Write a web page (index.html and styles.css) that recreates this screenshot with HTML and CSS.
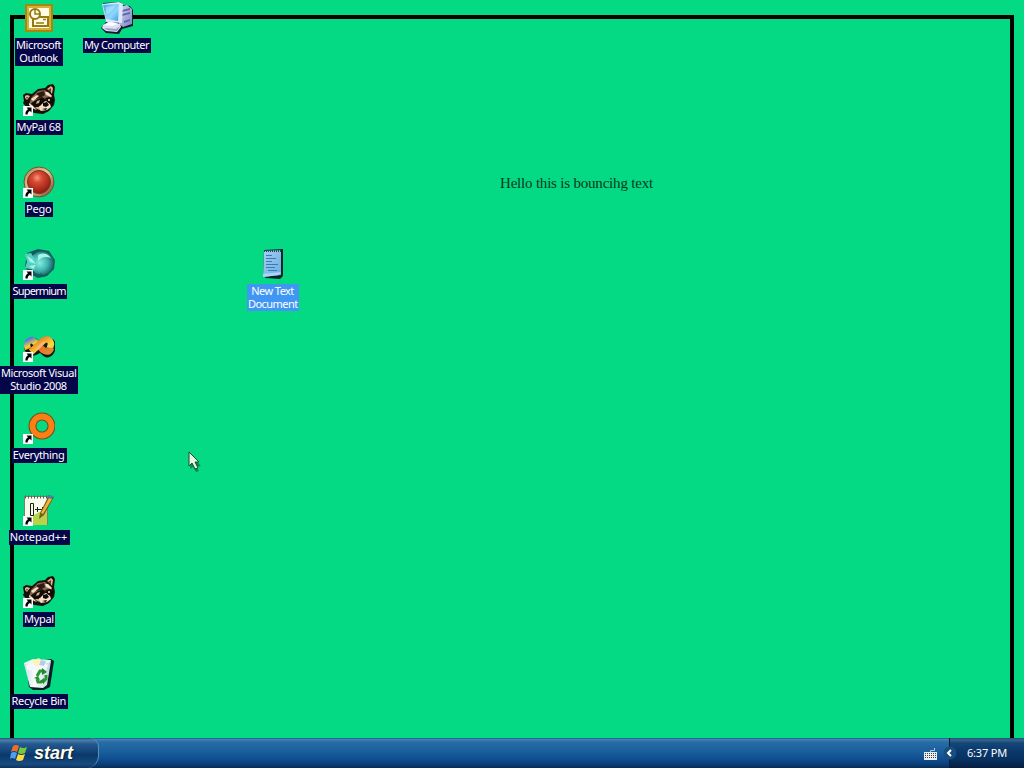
FILE: index.html
```html
<!DOCTYPE html>
<html lang="en">
<head>
<meta charset="utf-8">
<title>Desktop</title>
<link rel="stylesheet" href="styles.css">
</head>
<body>
<svg width="0" height="0" class="defs" aria-hidden="true">
  <defs>
    <radialGradient id="redball" cx=".42" cy=".32" r=".7"><stop offset="0" stop-color="#f49a80"/><stop offset=".3" stop-color="#d94a32"/><stop offset="1" stop-color="#8c180e"/></radialGradient>
    <linearGradient id="ring" x2="1" y2="1"><stop stop-color="#b37a4a"/><stop offset=".45" stop-color="#ecca92"/><stop offset="1" stop-color="#714023"/></linearGradient>
    <radialGradient id="teal" cx=".4" cy=".5" r=".65"><stop offset="0" stop-color="#84eee2"/><stop offset=".5" stop-color="#42b8b0"/><stop offset="1" stop-color="#0c5355"/></radialGradient>
    <linearGradient id="screen" x2="1" y2="1"><stop stop-color="#4aa6ee"/><stop offset=".6" stop-color="#8ed8fc"/><stop offset="1" stop-color="#4596e0"/></linearGradient>
    <linearGradient id="case" x2="1" y2="1"><stop stop-color="#d4d9fa"/><stop offset="1" stop-color="#7c84c0"/></linearGradient>
    <linearGradient id="paper" x2="1" y2="1"><stop stop-color="#a5d0ee"/><stop offset="1" stop-color="#6cacdf"/></linearGradient>
    <linearGradient id="bin" x2="1"><stop stop-color="#c9dce8"/><stop offset=".4" stop-color="#fbfdfd"/><stop offset="1" stop-color="#b9d6e0"/></linearGradient>
    <linearGradient id="vsa" x2="1" y2="1"><stop stop-color="#5d79d8"/><stop offset=".3" stop-color="#f0d238"/><stop offset=".55" stop-color="#f06a2c"/><stop offset="1" stop-color="#e0892f"/></linearGradient>
    <linearGradient id="vsb" x2="1" y2="1"><stop stop-color="#e75a35"/><stop offset=".4" stop-color="#f3a82c"/><stop offset=".7" stop-color="#f4dc48"/><stop offset="1" stop-color="#e8b040"/></linearGradient>
    <symbol id="shortcut" viewBox="0 0 10 10"><path fill="#fff" d="M0 0h10v10H0z"/><path fill="#000" d="M3.500 1.500h5v5L7 5C5.200 5.600 4.600 7 4.700 8.500H2.500C2 6.200 3.300 4.400 5 3.200z"/></symbol>
    <symbol id="raccoon" viewBox="0 0 32 32">
      <path fill="#17100c" d="M1 17L0 11l3-2 6 1 6-5 7-1 3-3 5-1 2 3-1 8 1 5-1 5-5 6-6 3-9-1-7-5-4-5z"/>
      <path fill="#e9b28a" d="M2 12l2-1 3 1-3 4-2-2zM24 5l4-3 2 2-1 6-2-3z"/>
      <path fill="#5f3d2c" d="M25 6l3-2v4zM3 13l2 0-1 2z"/>
      <path fill="#8c634c" d="M8 14l7-7 7-1 6 5 1 5-5 0-5-3-9 5-4 3z"/>
      <path fill="#2c1b13" d="M14 9l7-2 1 4-5 3-4 1z"/>
      <path fill="#f5dfc2" d="M8 15l6-4 2 1-6 5zM22 8l3 0 4 4-1 1-5-2zM6 19l3 2 5 5-3-1-5-4zM18 19l5-2 4 3 1 3-4 3-6 1-3-3z"/>
      <path fill="#110b08" d="M9 19l6-4 5 0 1 3-4 4-5 1zM22 14l5-1 4 3-1 4-4-1z"/>
      <path fill="#d9a884" d="M14 17l3-1-1 3-3 1zM25 15l2 0 0 2-2 0zM12 23l4 0 1 3-3-1z"/>
      <path fill="#100b0a" d="M20 19l4-1 2 3-3 2-3-1zM19 25l5-1-1 2z"/>
    </symbol>
  </defs>
</svg>
<main class="desktop">
  <div class="frame"></div>
  <div class="column">
    <div class="item">
      <svg class="icon" viewBox="0 0 32 32"><path fill="#a88610" d="M2 2h28v28H2z"/><path fill="#d0b23a" d="M4 4h24v24H4z"/><path fill="#fffce5" d="M6 6h20v20H6z"/><path fill="#fffce5" stroke="#977b10" stroke-width="2" d="M10 15h15v9H10z"/><path fill="none" stroke="#977b10" stroke-width="1.500" d="M20 17.500h3M13 21h8"/><circle cx="12" cy="12" r="5" fill="#fffce5" stroke="#977b10" stroke-width="2"/><path fill="none" stroke="#977b10" stroke-width="1.500" d="M12 8v4h4"/></svg>
      <span class="label outlook">Microsoft<br>Outlook</span>
    </div>
    <div class="item">
      <svg class="icon" viewBox="0 0 32 32"><use href="#raccoon" width="32" height="32"/><use href="#shortcut" y="22" width="10" height="10"/></svg>
      <span class="label mypal68">MyPal 68</span>
    </div>
    <div class="item">
      <svg class="icon" viewBox="0 0 32 32"><circle cx="16" cy="16" r="15" fill="url(#ring)" stroke="#68553a"/><circle cx="16" cy="16" r="11.500" fill="url(#redball)" stroke="#75362a"/><use href="#shortcut" y="22" width="10" height="10"/></svg>
      <span class="label pego">Pego</span>
    </div>
    <div class="item">
      <svg class="icon" viewBox="0 0 32 32"><path fill="#125b58" d="M4 5L15 1l11 2 6 9-1 9-7 7-9 2-8-4-5-7z"/><ellipse cx="19" cy="15" rx="12" ry="11.500" fill="url(#teal)"/><path fill="#55cfc0" d="M2 6l6-1 5 8-1 9-10-2 2-6z"/><path fill="#a5f5e6" d="M4 8l5 3 4 5-6-2zM15 7q8-4 13 3-8-3-13 3zM6 18l7-1-3 4z"/><path fill="none" stroke="#126b65" d="M12 25l4 5M17 25l5 4"/><use href="#shortcut" y="22" width="10" height="10"/></svg>
      <span class="label supermium">Supermium</span>
    </div>
    <div class="item">
      <svg class="icon" viewBox="0 0 32 32"><path fill="none" stroke="#151713" stroke-width="8" d="M7 13q-5 5 2 9 5 0 14-10 6-2 6 5-2 8-6 6L11 12q-3-1-5 2"/><path fill="none" stroke="url(#vsa)" stroke-width="6.500" d="M5 19q-3-8 4-9l4 3 7 7q6 4 8-2"/><path fill="none" stroke="url(#vsb)" stroke-width="6.500" d="M8 22l13-12q6-2 7 4l-1 4"/><path fill="none" stroke="#ffb090" stroke-width="2" d="M14 19l7-7"/><use href="#shortcut" y="22" width="10" height="10"/></svg>
      <span class="label studio">Microsoft Visual<br>Studio 2008</span>
    </div>
    <div class="item">
      <svg class="icon" viewBox="0 0 32 32"><circle cx="19" cy="14" r="9.500" fill="none" stroke="#71501a" stroke-width="8"/><circle cx="19" cy="14" r="9.500" fill="none" stroke="#fa7f16" stroke-width="5.800"/><use href="#shortcut" y="22" width="10" height="10"/></svg>
      <span class="label everything">Everything</span>
    </div>
    <div class="item">
      <svg class="icon" viewBox="0 0 32 32"><path fill="#6c8872" d="M1 2h24v29H1z"/><path fill="#f8faec" d="M2 3h22v24H2z"/><path fill="#b7d448" d="M9 22l15-8v17H9z"/><path stroke="#59635b" stroke-dasharray="1 2" stroke-width="3" d="M2 3h22"/><path fill="none" stroke="#182018" d="M7.500 9.500h3v12h-3zM12 15.500h5M14.500 13v5M17 15.500h5M19.500 13v5"/><path fill="#745d24" d="M26 1l5 2-10 18-5 4 1-6z"/><path fill="#edb833" d="M26 4l3 1-9 15-2-1z"/><path fill="#3e87b6" d="M25 1l5 1-1 3-5-2z"/><use href="#shortcut" y="22" width="10" height="10"/></svg>
      <span class="label notepad">Notepad++</span>
    </div>
    <div class="item">
      <svg class="icon" viewBox="0 0 32 32"><use href="#raccoon" width="32" height="32"/><use href="#shortcut" y="22" width="10" height="10"/></svg>
      <span class="label mypal">Mypal</span>
    </div>
    <div class="item">
      <svg class="icon" viewBox="0 0 32 32"><path fill="#071e23" d="M3 5l25-4 3 2-4 26-6 3H10l-4-3z"/><path fill="#eff7f5" d="M1 5l9-4 18 1-2 6H2z"/><path fill="url(#bin)" d="M1 6l25-1 2-2-4 24-4 3-13-1z"/><path fill="#fff3b5" d="M9 3l7-3 4 5-7 5z"/><path fill="#f4f8fb" d="M3 7l7-2 4 4 6-5 5 3-2 5H4z"/><path fill="#b8cbed" d="M18 2l5 1-2 5-5-1z"/><g fill="none" stroke="#259b32" stroke-width="3"><path d="M14 18l3-5h4M23 17l0 4-3 3M19 24h-4l-1-3"/></g><path fill="#25882d" d="M19 10l5 4-5 3zM21 20v6l-4-3zM11 20l4-2 2 4z"/></svg>
      <span class="label recycle">Recycle Bin</span>
    </div>
  </div>
  <div class="item computer-item">
    <svg class="icon wide" viewBox="0 0 34 32"><path fill="#151932" d="M3 1L20 0l2 3 8 1 3 4v16l-11 3-3 5-13-1-5-5 5-6z"/><path fill="url(#case)" d="M20 5l7-2 5 4v15l-9 3-4-3z"/><path fill="#5d6aa6" d="M22 8l8-2v2l-8 2zM22 12l8-2v2l-8 2zM24 19l6-2v2l-6 2z"/><path fill="#dce8fb" d="M2 2l17-2 4 2-1 19-16-1z"/><path fill="url(#screen)" d="M3 3l16-1-1 17-12-2z"/><path fill="#c2f0ff" d="M6 5l10-2-4 6-6 4z" opacity=".5"/><path fill="#dddff5" d="M3 23l7-4 10 3 1 3-4 5-11-1-4-3z"/><path fill="#fff" d="M4 23l6-3 8 2-6 2z"/><path fill="#929fca" d="M4 26l12 1 4-3-3 5-10-1z"/></svg>
    <span class="label computer">My Computer</span>
  </div>
  <div class="item document-item">
    <svg class="icon" viewBox="0 0 32 32"><path fill="#06242b" d="M7 2l19-1v27l-3 3-14-1-3-2z"/><path fill="url(#paper)" d="M7 3l17-1v25l-18 2z"/><path stroke="#254968" stroke-dasharray="1 1" stroke-width="2" d="M7 3h17"/><path fill="none" stroke="#3a78bd" d="M9 7.500h6M9 10.500h10M9 13.500h6M9 16.500h12M9 19.500h9M11 22.500h9"/><path fill="#a9d5f6" d="M6 26l18-2-2 3-16 2z"/></svg>
    <span class="label selected">New Text<br>Document</span>
  </div>
  <p class="bouncing">Hello this is bouncihg text</p>
  <svg class="cursor" viewBox="0 0 14 21"><path fill="#07562f" opacity=".6" d="M3 4l10 11-5 1 3 4-3 1-3-5-3 2z"/><path fill="#e8f4e8" stroke="#184d30" d="M1 1l10 10H7l3 6-3 1-3-6-3 3z"/></svg>
</main>
<footer class="taskbar">
  <div class="start">
    <svg class="flag" viewBox="0 0 18 18"><path fill="#f16b2a" d="M3 2q3-2 6 0L7 8q-3-2-6 0z"/><path fill="#76c83d" d="M10 3q3 2 7 0l-2 6q-4 2-7 0z"/><path fill="#4d9df0" d="M1 9q3-2 6 0l-2 6q-3-2-5 0z"/><path fill="#ffda3d" d="M8 10q3 2 7 0l-2 6q-4 2-7 0z"/></svg>
    <span>start</span>
  </div>
  <div class="tasks">
    <svg class="keyboard" viewBox="0 0 13 12"><path fill="none" stroke="#b8cbd9" d="M6.500 4V2.500H10.500V0"/><path fill="#e7edf0" d="M0 4h13v8H0z"/><path stroke="#35414c" stroke-dasharray="1 1" d="M1 5.500h11M1 7.500h11M1 9.500h11"/></svg>
  </div>
  <div class="tray">
    <svg class="chevron" viewBox="0 0 14 16"><circle cx="7" cy="8" r="6.500" fill="#174e80"/><path fill="none" stroke="#fff" stroke-width="2" d="M8 5L5 8l3 3"/></svg>
    <span class="clock">6:37 PM</span>
  </div>
</footer>
</body>
</html>
```
FILE: styles.css
```css
* { box-sizing: border-box; }
body {
  margin: 0;
  width: 1024px;
  height: 768px;
  overflow: hidden;
  display: flex;
  flex-direction: column;
  background: #03da83;
  font-family: "Noto Sans", "Open Sans", sans-serif;
}
.defs { position: absolute; }
.desktop { position: relative; flex: 1; overflow: hidden; }
.frame {
  position: absolute;
  inset: 15px 10px -10px;
  border: 4px solid #000;
}
.column { position: relative; width: 78px; display: flex; flex-direction: column; padding-top: 2px; }
.item { height: 82px; width: 78px; display: flex; flex-direction: column; align-items: center; }
.icon { width: 32px; height: 32px; flex: none; margin-bottom: 4px; }
.icon.wide { width: 34px; }
.label {
  flex: none;
  padding: 0 2px 1px 1px;
  min-height: 15px;
  background: #05054a;
  color: #fff;
  font-size: 11px;
  line-height: 13px;
  text-align: center;
  white-space: nowrap;
}
.outlook { width: 48px; min-height: 28px; letter-spacing: -.4px; }
.mypal68 { width: 47px; letter-spacing: -.3px; }
.pego { width: 28px; letter-spacing: -.2px; }
.supermium { width: 55px; letter-spacing: -.8px; }
.studio { width: 78px; min-height: 28px; letter-spacing: -.42px; }
.everything { width: 55px; letter-spacing: -.35px; }
.notepad { width: 61px; }
.mypal { width: 32px; letter-spacing: -.3px; }
.recycle { width: 57px; letter-spacing: -.3px; }
.computer { width: 68px; letter-spacing: -.52px; }
.selected { width: 52px; min-height: 27px; letter-spacing: -.55px; background: #3f96f3; }
.computer-item { position: absolute; left: 78px; top: 2px; }
.document-item { position: absolute; left: 234px; top: 248px; }
.bouncing {
  position: absolute;
  left: 500px;
  top: 174px;
  margin: 0;
  color: #053820;
  font: 15px/18px "Liberation Serif", serif;
  letter-spacing: -.2px;
  white-space: nowrap;
}
.cursor { position: absolute; left: 188px; top: 451px; width: 14px; height: 21px; }
.taskbar {
  position: relative;
  flex: none;
  height: 30px;
  display: flex;
  color: #fff;
  background: linear-gradient(#173e66 0, #4389bd 1px, #286da6 4px, #1b609d 13px, #105093 20px, #093f79 26px, #062c59 30px);
}
.start {
  width: 99px;
  display: flex;
  align-items: center;
  gap: 6px;
  padding-left: 10px;
  border-right: 1px solid #5793b9;
  border-radius: 0 9px 12px 0;
  background: linear-gradient(#254c72 0, #4b80ad 2px, #24598e 6px, #114477 14px, #0b386b 17px, #174b80 26px, #0b3260 30px);
  color: #fffff0;
  font: italic bold 18px/28px "Liberation Sans", sans-serif;
  text-shadow: 1px 1px 1px #09213d;
}
.flag { width: 18px; height: 18px; }
.tasks { flex: 1; display: flex; justify-content: flex-end; align-items: center; padding: 2px 12px 0 0; }
.keyboard { width: 13px; height: 12px; }
.tray {
  width: 75px;
  display: flex;
  align-items: center;
  border-left: 1px solid #071c3d;
  background: linear-gradient(#254c72 0, #35658e 2px, #144778 5px, #0a376a 14px, #07305e 22px, #041d40 30px);
}
.chevron { width: 14px; height: 16px; margin-left: -7px; }
.clock { margin: -1px 0 0 10px; font-size: 11px; letter-spacing: -.2px; white-space: nowrap; }
```
